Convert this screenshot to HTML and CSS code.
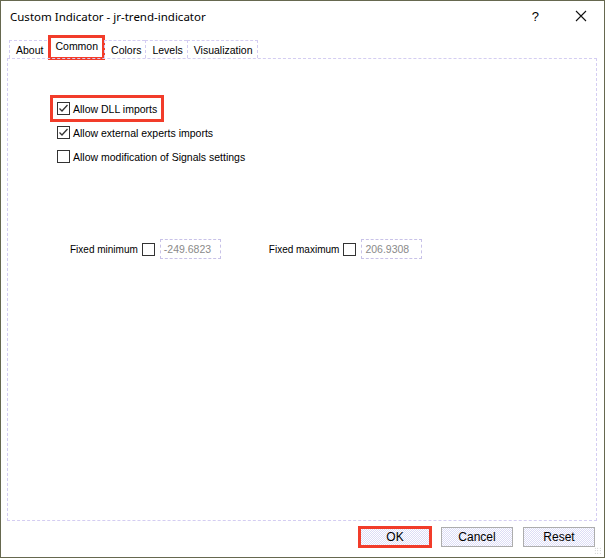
FILE: index.html
```html
<!DOCTYPE html>
<html lang="en">
<head>
    <meta charset="UTF-8">
    <title>Custom Indicator - jr-trend-indicator</title>
    <link rel="stylesheet" href="styles.css">
</head>
<body>
    <div class="window">
        <div class="titlebar">
            <span class="title">Custom Indicator - jr-trend-indicator</span>
            <span class="help">?</span>
            <svg class="close" width="12" height="12" viewBox="0 0 12 12">
                <path d="M1 1 L11 11 M11 1 L1 11" stroke="#111" stroke-width="1.1" fill="none"/>
            </svg>
        </div>

        <div class="tabs">
            <div class="tab">About</div>
            <div class="tab active marked">Common</div>
            <div class="tab">Colors</div>
            <div class="tab">Levels</div>
            <div class="tab">Visualization</div>
        </div>

        <div class="panel">
            <div class="checks">
                <label class="check marked">
                    <span class="box"><svg width="11" height="11" viewBox="0 0 11 11"><path d="M1.5 5.5 L4 8 L9.5 2" stroke="#333" stroke-width="1.3" fill="none"/></svg></span>
                    Allow DLL imports
                </label>
                <label class="check">
                    <span class="box"><svg width="11" height="11" viewBox="0 0 11 11"><path d="M1.5 5.5 L4 8 L9.5 2" stroke="#333" stroke-width="1.3" fill="none"/></svg></span>
                    Allow external experts imports
                </label>
                <label class="check">
                    <span class="box"></span>
                    Allow modification of Signals settings
                </label>
            </div>

            <div class="range">
                <div class="field">
                    <span class="label">Fixed minimum</span>
                    <span class="box"></span>
                    <span class="input">-249.6823</span>
                </div>
                <div class="field">
                    <span class="label">Fixed maximum</span>
                    <span class="box"></span>
                    <span class="input">206.9308</span>
                </div>
            </div>
        </div>

        <div class="buttons">
            <button class="btn marked">OK</button>
            <button class="btn">Cancel</button>
            <button class="btn">Reset</button>
            <span class="grip"></span>
        </div>
    </div>
</body>
</html>
```

FILE: styles.css
```css
* { box-sizing: border-box; }
body { margin: 0; background: #fff; font-family: 'Liberation Sans', Arial, sans-serif; font-size: 10.5px; color: #000; }

.window { position: relative; width: 605px; height: 558px; border: 1px solid #66684f; background: #fff; display: flex; flex-direction: column; }

.titlebar { height: 31px; display: flex; align-items: center; padding: 0 0 1px 9px; }
.title { flex: 1; font-family: 'Noto Sans', 'Liberation Sans', sans-serif; font-size: 11.5px; color: #000; }
.help { font-family: 'Liberation Sans', sans-serif; font-size: 13px; margin-right: 36px; }
.close { margin-right: 17px; }

.tabs { display: flex; align-items: flex-end; height: 26px; padding-left: 8px; }
.tab { height: 18px; line-height: 18px; padding: 0 4px 0 6px; border: 1px dashed #d4cdf2; border-bottom: none; border-right: none; color: #000; }
.tab:last-child { border-right: 1px dashed #d4cdf2; }
.tab.active { height: 21px; line-height: 19px; margin: 0 1px 0 3px; padding: 0 5px; border: none; }
.marked { outline: 3px solid #f23c2a; outline-offset: -1px; }

.panel { height: 463px; margin: 0 7px 0 6px; border: 1px dashed #d4cdf2; display: flex; flex-direction: column; }

.checks { display: flex; flex-direction: column; gap: 11px; padding: 43px 0 0 49px; }
.check { display: flex; align-items: center; gap: 2px; height: 13px; width: fit-content; padding-right: 4px; }
.check.marked { outline-offset: 4px; padding-right: 0; }

.box { display: inline-flex; align-items: center; justify-content: center; width: 13px; height: 13px; border: 1px solid #333; background: #fff; }
.check .box { margin-right: 1px; }

.range { display: flex; gap: 48px; padding: 76px 0 0 62px; }
.field { display: flex; align-items: center; gap: 4px; }
.field .label { font-size: 10px; }
.field .box { margin-right: 1px; }
.input { width: 61px; height: 20px; line-height: 18px; padding-left: 3px; border: 1px dashed #c8c2e8; color: #8a8a8a; }

.buttons { display: flex; justify-content: flex-end; gap: 10px; padding: 6px 9px 0 0; }
.btn { width: 72px; height: 20px; padding: 0; font-family: 'Liberation Sans', Arial, sans-serif; font-size: 12px; color: #000; border: 1px solid #adadad; background: repeating-conic-gradient(#dcdcf6 0 25%, #fff 0 50%) 0 0 / 2px 2px; }
.btn.marked { outline-offset: -2px; }

.grip { position: absolute; right: 3px; bottom: 3px; width: 7px; height: 7px; background: radial-gradient(circle, #b5b5b5 0.6px, transparent 0.8px) 0 0 / 2.5px 2.5px; }
```
